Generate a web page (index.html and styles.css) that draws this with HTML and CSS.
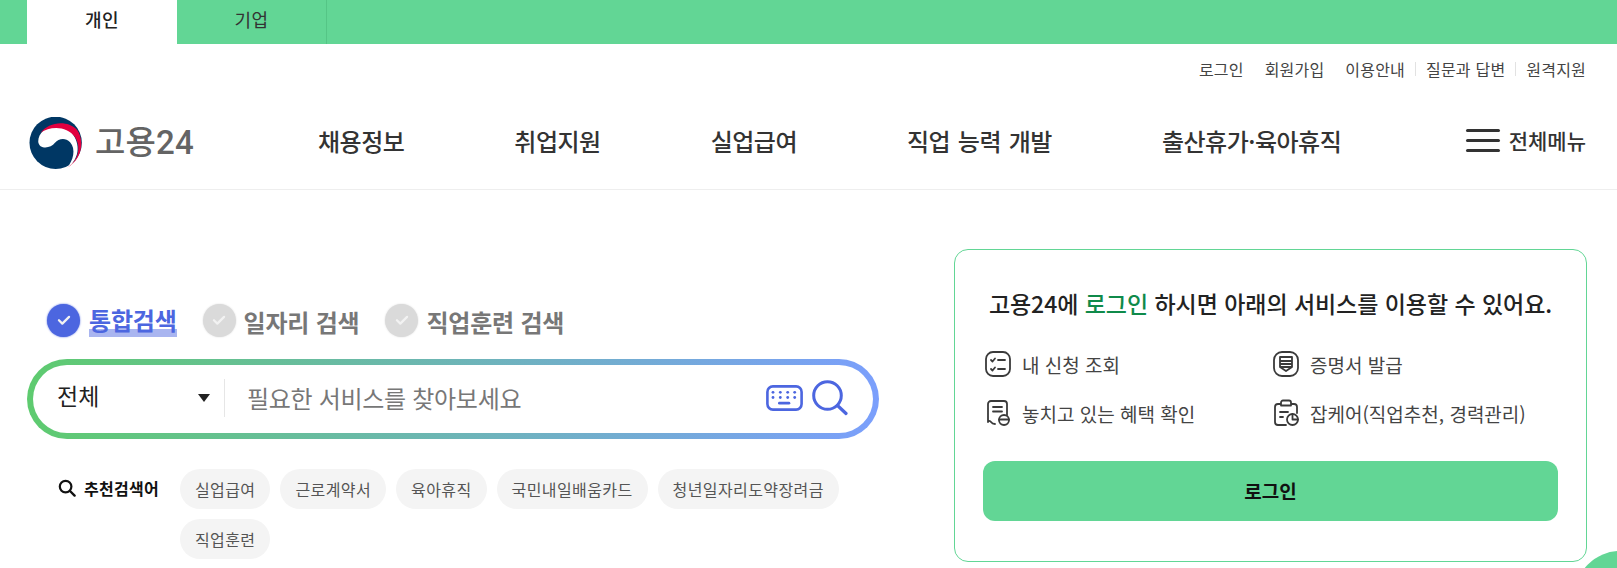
FILE: index.html
```html
<!DOCTYPE html>
<html lang="ko">
<head>
<meta charset="utf-8">
<title>고용24</title>
<link rel="stylesheet" href="styles.css">
</head>
<body>
<div class="topbar">
  <a class="top-tab active">개인</a>
  <a class="top-tab">기업</a>
</div>
<header class="header">
  <nav class="util">
    <a>로그인</a><a>회원가입</a><a>이용안내</a><i class="sep"></i><a>질문과 답변</a><i class="sep"></i><a>원격지원</a>
  </nav>
  <div class="gnb-row">
    <a class="logo">
      <svg class="logo-mark" viewBox="28 35 160 155" aria-hidden="true">
        <circle cx="107" cy="112" r="78" fill="#003764"/>
        <path fill="#fff" d="M55 108C55 80 85 55 120 62C165 72 185 125 165 160C158 172 150 180 140 187C160 165 168 130 150 110C135 95 115 100 105 112C95 125 75 130 62 122C58 118 55 113 55 108Z"/>
        <path fill="#e2003f" d="M62 82C85 50 140 42 170 72C192 100 190 160 140 187C178 165 182 120 165 95C140 60 90 62 62 82Z"/>
      </svg>
      <span class="logo-text">고용24</span>
    </a>
    <ul class="gnb">
      <li>채용정보</li><li>취업지원</li><li>실업급여</li><li>직업 능력 개발</li><li>출산휴가·육아휴직</li>
    </ul>
    <a class="all-menu">
      <span class="burger"><i></i><i></i><i></i></span>
      <span>전체메뉴</span>
    </a>
  </div>
</header>
<main class="main">
  <section class="search">
    <div class="search-tabs">
      <label class="stab on"><span class="check"><svg viewBox="0 0 16 16"><path d="M3.5 8.2l3 3 6-6"/></svg></span><em>통합검색</em></label>
      <label class="stab"><span class="check"><svg viewBox="0 0 16 16"><path d="M3.5 8.2l3 3 6-6"/></svg></span><em>일자리 검색</em></label>
      <label class="stab"><span class="check"><svg viewBox="0 0 16 16"><path d="M3.5 8.2l3 3 6-6"/></svg></span><em>직업훈련 검색</em></label>
    </div>
    <div class="search-box">
      <div class="search-inner">
        <div class="select"><span>전체</span><i class="caret"></i></div>
        <div class="placeholder">필요한 서비스를 찾아보세요</div>
        <svg class="kbd" viewBox="0 0 37 26" aria-hidden="true">
          <rect x="1.4" y="1.4" width="34.2" height="23.2" rx="5.5" fill="none" stroke="#4c66e0" stroke-width="2.6"/>
          <g fill="#4c66e0"><circle cx="7" cy="7.3" r="1.4"/><circle cx="14.3" cy="7.3" r="1.4"/><circle cx="21.7" cy="7.3" r="1.4"/><circle cx="28.7" cy="7.3" r="1.4"/><circle cx="7" cy="12.5" r="1.4"/><circle cx="14.3" cy="12.5" r="1.4"/><circle cx="21.7" cy="12.5" r="1.4"/><circle cx="28.7" cy="12.5" r="1.4"/><rect x="12" y="16.8" width="12.3" height="2.8" rx="1.4"/></g>
        </svg>
        <svg class="mag" viewBox="0 0 36 36" aria-hidden="true">
          <circle cx="15.5" cy="15.5" r="13.8" fill="none" stroke="#4c66e0" stroke-width="3"/>
          <path d="M25.5 25.5L34 33.5" fill="none" stroke="#4c66e0" stroke-width="3.2" stroke-linecap="round"/>
        </svg>
      </div>
    </div>
    <div class="keywords">
      <div class="kw-label">
        <svg viewBox="0 0 18 18" aria-hidden="true"><circle cx="7.6" cy="7.6" r="5.8" fill="none" stroke="#111" stroke-width="2.2"/><path d="M12 12l4.6 4.6" stroke="#111" stroke-width="2.4" stroke-linecap="round"/></svg>
        <strong>추천검색어</strong>
      </div>
      <div class="chips">
        <a class="chip">실업급여</a><a class="chip">근로계약서</a><a class="chip">육아휴직</a><a class="chip">국민내일배움카드</a><a class="chip">청년일자리도약장려금</a><a class="chip">직업훈련</a>
      </div>
    </div>
  </section>
  <aside class="login-card">
    <h2>고용24에 <b>로그인</b> 하시면 아래의 서비스를 이용할 수 있어요.</h2>
    <ul class="services">
      <li>
        <svg viewBox="0 0 28 28" aria-hidden="true"><rect x="2" y="2" width="24" height="24" rx="7"/><path d="M7 10l1.5 1.5L11 8.5M14 10h7M7 19l1.5 1.5L11 17.5M14 19h7"/></svg>
        <span>내 신청 조회</span>
      </li>
      <li>
        <svg viewBox="0 0 28 28" aria-hidden="true"><rect x="2" y="2" width="24" height="24" rx="8"/><path d="M8 7h12v10h-12zM8 11h12M8 14h12M8 17l6 4 6-4"/></svg>
        <span>증명서 발급</span>
      </li>
      <li>
        <svg viewBox="0 0 28 28" aria-hidden="true"><path d="M4 23V5a3 3 0 0 1 3-3h13a3 3 0 0 1 3 3v11M4 23c1-1.5 2-1.5 3 0s2 2 4 2M9 8h9M9 12.5h9"/><circle cx="20" cy="21" r="5"/><path d="M15 20.5h10"/></svg>
        <span>놓치고 있는 혜택 확인</span>
      </li>
      <li>
        <svg viewBox="0 0 28 28" aria-hidden="true"><path d="M9 5H6a3 3 0 0 0-3 3v15a3 3 0 0 0 3 3h8M19 5h3a3 3 0 0 1 3 3v6M9 3.5a2 2 0 0 1 2-2h6a2 2 0 0 1 2 2v3h-10zM8 13h8M8 18h3"/><circle cx="20.5" cy="20.5" r="5.5"/><path d="M20.5 15v5.5h5.5"/></svg>
        <span>잡케어(직업추천, 경력관리)</span>
      </li>
    </ul>
    <a class="login-btn">로그인</a>
  </aside>
</main>
<div class="float-ball"></div>
</body>
</html>
```
FILE: styles.css
```css
* { box-sizing: border-box; }
html, body { margin: 0; padding: 0; height: 568px; overflow: hidden; background: #fff; }
body { font-family: "Noto Sans CJK KR", "Noto Sans", sans-serif; color: #333; position: relative; }
ul { list-style: none; margin: 0; padding: 0; }
em, i { font-style: normal; }

.topbar { display: flex; height: 44px; padding-left: 27px; background: #62d695; }
.top-tab { width: 150px; display: flex; align-items: center; justify-content: center; font-size: 18px; letter-spacing: 0.5px; color: #333; padding-bottom: 7px; border-right: 1px solid #55c586; }
.top-tab.active { background: #fff; border-right: 0; color: #222; font-weight: 500; }

.header { height: 146px; border-bottom: 1px solid #eee; padding: 0 31px 0 29px; }
.util { display: flex; justify-content: flex-end; align-items: center; height: 50px; font-size: 16px; letter-spacing: 0.2px; color: #444; gap: 21px; }
.util .sep { width: 1px; height: 14px; background: #e2e2e2; margin: 0 -11px; }
.gnb-row { display: flex; align-items: center; height: 92px; }
.logo { display: flex; align-items: center; gap: 12px; width: 289px; flex: none; }
.logo-mark { width: 54px; height: 52px; margin-top: 6px; }
.logo-text { font-family: Roboto, "Noto Sans CJK KR", sans-serif; font-size: 33px; font-weight: 500; color: #646464; letter-spacing: 0.2px; }
.gnb { display: flex; gap: 110px; font-size: 24px; letter-spacing: -0.5px; word-spacing: 1.5px; font-weight: 500; color: #333; }
.all-menu { margin-left: auto; display: flex; align-items: center; gap: 9px; font-size: 21px; font-weight: 500; color: #333; }
.burger { display: flex; flex-direction: column; gap: 7px; width: 34px; }
.burger i { height: 3px; background: #333; border-radius: 2px; }

.main { display: flex; justify-content: space-between; padding: 59px 30px 0 27px; }
.search { width: 852px; padding-top: 55px; }
.search-tabs { display: flex; gap: 26px; padding-left: 20px; height: 32px; }
.stab { display: flex; align-items: center; gap: 8px; font-size: 24px; letter-spacing: -0.2px; font-weight: 700; color: #777; }
.stab em { padding-top: 2px; }
.check { width: 33px; height: 33px; border-radius: 50%; background: #dadada; display: flex; align-items: center; justify-content: center; box-shadow: 0 0 2px #dadada; }
.check svg { width: 18px; height: 18px; fill: none; stroke: #f2f2f2; stroke-width: 2; stroke-linecap: round; stroke-linejoin: round; }
.stab.on { color: #4c66e0; }
.stab.on .check { background: #4c66e0; box-shadow: 0 0 2px #4c66e0; }
.stab.on em { background: linear-gradient(#a9b5f0, #a9b5f0) no-repeat 0 100% / 100% 8px; line-height: 34px; padding-top: 0; margin-left: 1px; }

.search-box { margin-top: 23px; height: 80px; border-radius: 40px; padding: 6px; background: linear-gradient(90deg, #5ecb6f 0%, #7b9ffc 100%); }
.search-inner { height: 68px; border-radius: 34px; background: #fff; display: flex; align-items: center; padding: 0 25px 3px 24px; }
.select { width: 168px; height: 38px; display: flex; align-items: center; justify-content: space-between; padding-right: 14px; border-right: 1px solid #e6e6e6; font-size: 23px; color: #222; flex: none; }
.select span { padding-bottom: 5px; }
.caret { width: 0; height: 0; border-left: 6px solid transparent; border-right: 6px solid transparent; border-top: 8px solid #222; }
.placeholder { flex: 1; padding-left: 22px; font-size: 24px; letter-spacing: -0.3px; color: #777; }
.kbd { width: 37px; height: 26px; margin-right: 9px; }
.mag { width: 36px; height: 36px; }

.keywords { display: flex; margin-top: 30px; padding-left: 31px; }
.kw-label { display: flex; align-items: flex-start; gap: 8px; width: 122px; flex: none; padding-top: 7px; font-size: 16px; letter-spacing: 0.3px; color: #111; }
.kw-label svg { width: 18px; height: 18px; margin-top: 3px; }
.kw-label strong { font-weight: 700; }
.chips { display: flex; flex-wrap: wrap; gap: 10px; width: 699px; }
.chip { height: 40px; padding: 0 15px; border-radius: 20px; background: #f4f4f4; font-size: 16px; letter-spacing: 0.4px; color: #555; display: flex; align-items: center; }

.login-card { width: 633px; height: 313px; border: 1px solid #62d695; border-radius: 14px; padding: 0 28px; }
.login-card h2 { margin: 36px 0 0; text-align: center; font-size: 23px; letter-spacing: -0.05px; font-weight: 500; color: #222; line-height: 34px; }
.login-card h2 b { font-weight: 500; color: #0f8a4a; }
.services { display: grid; grid-template-columns: 288px 1fr; row-gap: 19px; margin-top: 29px; }
.services li { display: flex; align-items: center; gap: 10px; height: 30px; font-size: 19px; color: #444; padding-left: 1px; }
.services svg { width: 28px; height: 28px; fill: none; stroke: #3a3a3a; stroke-width: 1.8; stroke-linecap: round; stroke-linejoin: round; flex: none; }
.login-btn { display: flex; align-items: center; justify-content: center; height: 60px; margin-top: 33px; padding-bottom: 2px; border-radius: 12px; background: #62d695; font-size: 19px; font-weight: 700; color: #111; }

.float-ball { position: absolute; left: 1575px; top: 551px; width: 90px; height: 90px; border-radius: 50%; background: #62d695; }
```
